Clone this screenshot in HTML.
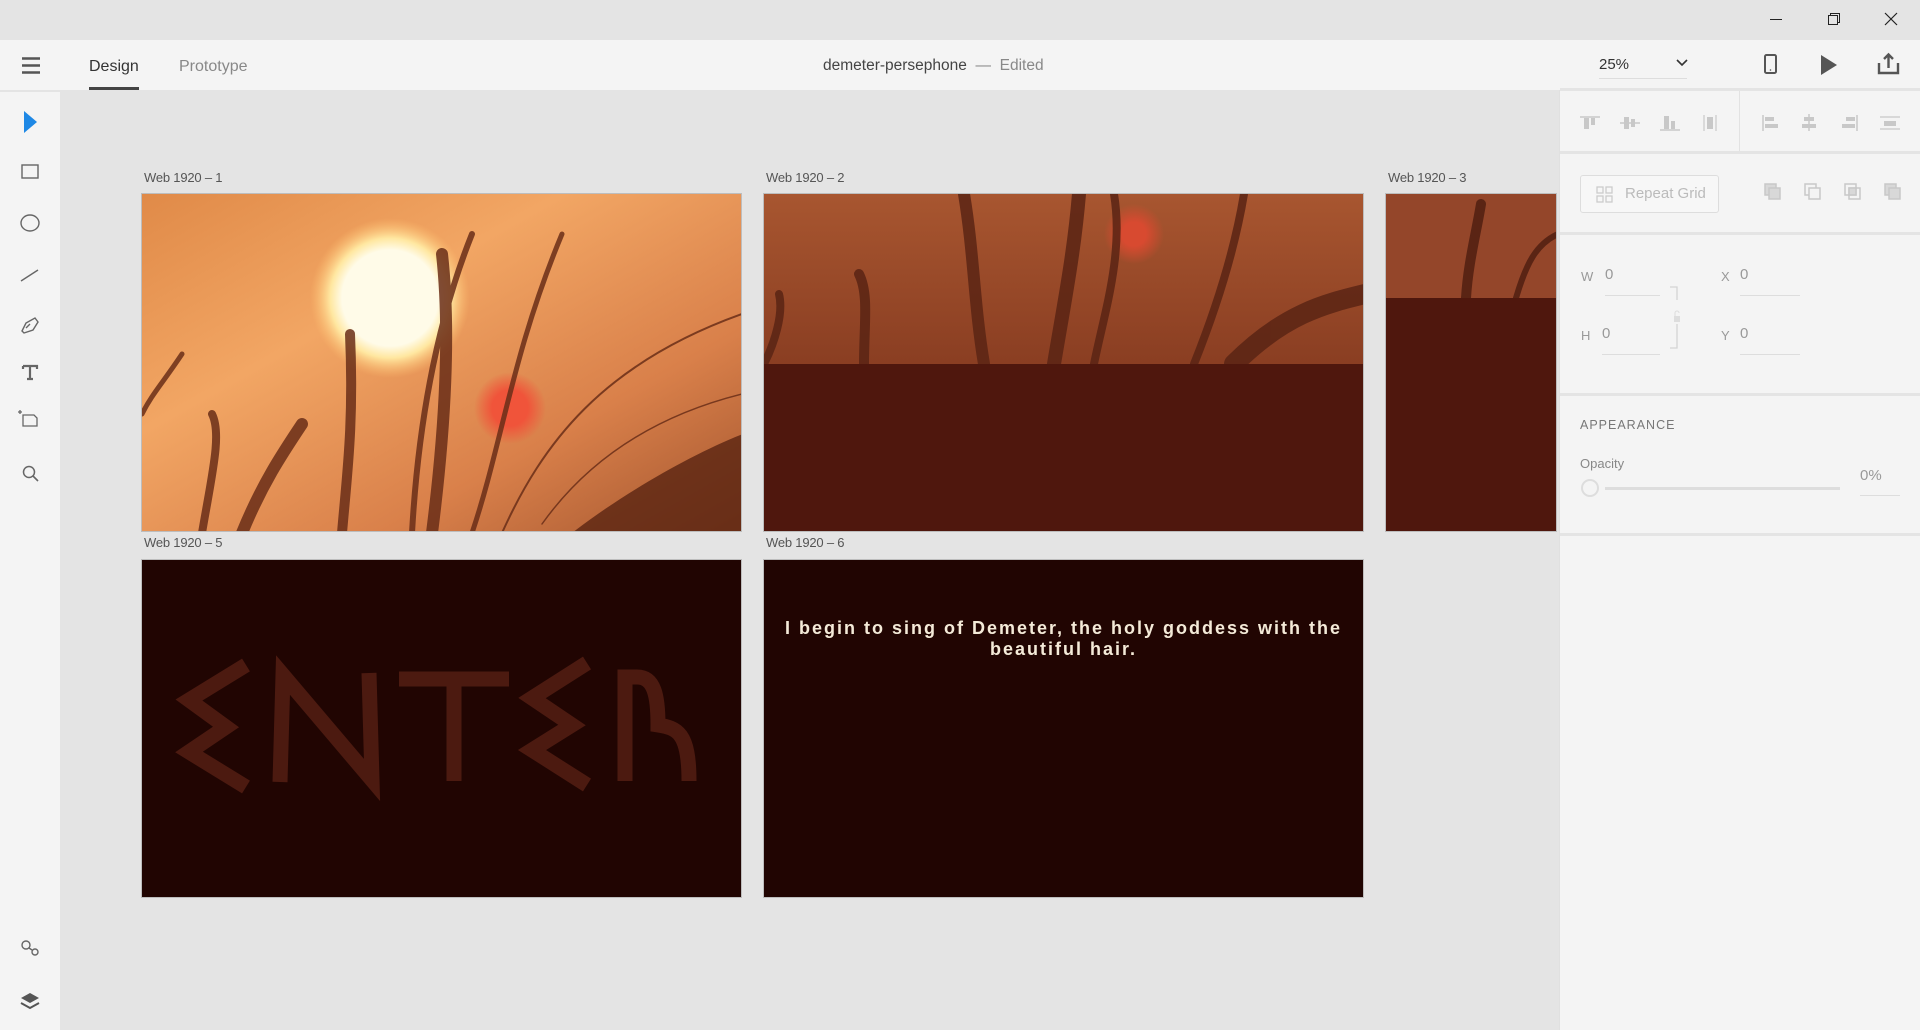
<!DOCTYPE html>
<html><head><meta charset="utf-8"><style>
*{margin:0;padding:0;box-sizing:border-box}
body{width:1920px;height:1030px;background:#e4e4e4;font-family:"Liberation Sans",sans-serif;position:relative;overflow:hidden}
.abs{position:absolute}
.t{position:absolute;white-space:nowrap}
.lbl{position:absolute;font-size:13px;color:#555;letter-spacing:-0.2px}
.ab{position:absolute;border:1px solid #bdbdbd;overflow:hidden}
.hr{position:absolute;left:1560px;width:360px;height:3px;background:#e4e4e4}
</style></head><body>
<!-- title bar -->
<div class="abs" style="left:0;top:0;width:1920px;height:40px;background:#e4e4e4"></div>
<svg class="abs" style="left:1760px;top:8px" width="150" height="24" viewBox="0 0 150 24">
<line x1="10" y1="11.5" x2="22" y2="11.5" stroke="#222" stroke-width="1"/>
<rect x="68.5" y="7.5" width="9" height="9" fill="none" stroke="#222"/>
<path d="M70.5 7.5V5.5h9v9h-2" fill="none" stroke="#222"/>
<path d="M125 5l12 12M137 5l-12 12" stroke="#222" stroke-width="1.2"/>
</svg>
<!-- top toolbar -->
<div class="abs" style="left:0;top:40px;width:1920px;height:50px;background:#f4f4f4"></div>
<svg class="abs" style="left:20px;top:56px" width="24" height="20"><path d="M2 2.5h18M2 9.5h18M2 16.5h18" stroke="#555" stroke-width="2.4"/></svg>
<div class="t" style="left:89px;top:58px;font-size:16px;color:#333">Design</div>
<div class="abs" style="left:89px;top:87px;width:50px;height:3px;background:#444"></div>
<div class="t" style="left:179px;top:58px;font-size:16px;color:#888">Prototype</div>
<div class="t" style="left:823px;top:57px;font-size:15.5px;color:#444">demeter-persephone <span style="color:#888">&nbsp;—&nbsp; Edited</span></div>
<div class="t" style="left:1599px;top:56px;font-size:15px;color:#333">25%</div>
<svg class="abs" style="left:1675px;top:58px" width="14" height="10"><path d="M2 2l5 5 5-5" fill="none" stroke="#333" stroke-width="1.6"/></svg>
<div class="abs" style="left:1599px;top:78px;width:88px;height:1px;background:#ddd"></div>
<svg class="abs" style="left:1760px;top:52px" width="150" height="30" viewBox="0 0 150 30">
<rect x="5" y="3" width="11" height="18" rx="1.5" fill="none" stroke="#555" stroke-width="2"/><circle cx="10.5" cy="18" r="0.8" fill="#555"/>
<path d="M61 3l16 10-16 10z" fill="#555"/>
<path d="M119 11v10h19V11M128.5 16V3M124 7l4.5-4.5 4.5 4.5" fill="none" stroke="#555" stroke-width="2.4"/>
</svg>
<!-- left toolbar -->
<div class="abs" style="left:0;top:92px;width:60px;height:938px;background:#f4f4f4"></div>
<svg class="abs" style="left:0;top:92px" width="60" height="938" viewBox="0 0 60 938">
<path d="M24 20v22l13-11z" fill="#1e88e5" transform="translate(0,-1)"/>
<rect x="22" y="73" width="16" height="13" fill="none" stroke="#666" stroke-width="1.4"/>
<ellipse cx="30" cy="131" rx="9" ry="8" fill="none" stroke="#666" stroke-width="1.4"/>
<path d="M21 189l17-11" stroke="#666" stroke-width="1.4"/>
<path d="M22 239l4-8 9-5 3 4-5 8-9 3zM26 236l4-4" fill="none" stroke="#666" stroke-width="1.4"/>
<path d="M23 274h14v3M30 274v13M27 287h6M23 274v3" fill="none" stroke="#666" stroke-width="2.2"/>
<path d="M23 323v11h14v-8l-3-3z M18 320h4M20 318v4" fill="none" stroke="#666" stroke-width="1.3"/>
<circle cx="29" cy="380" r="5.5" fill="none" stroke="#666" stroke-width="1.5"/><path d="M33 384l5 5" stroke="#666" stroke-width="1.6"/>
<circle cx="26" cy="853" r="4" fill="none" stroke="#666" stroke-width="1.4"/><circle cx="35" cy="860" r="3" fill="none" stroke="#666" stroke-width="1.4"/><path d="M29 856l3 2" stroke="#666" stroke-width="1.4"/>
<path d="M21 906l9-5 9 5-9 5z" fill="#555"/><path d="M21 911l9 5 9-5" fill="none" stroke="#555" stroke-width="2"/>
</svg>
<!-- right panel -->
<div class="abs" style="left:1560px;top:90px;width:360px;height:940px;background:#f4f4f4"></div>
<div class="abs" style="left:1559px;top:90px;width:1px;height:940px;background:#e0e0e0"></div>
<div class="hr" style="top:88px"></div>
<div class="abs" style="left:1739px;top:91px;width:1px;height:61px;background:#e2e2e2"></div>
<svg class="abs" style="left:1560px;top:105px" width="360" height="40" viewBox="0 0 360 40">
<g fill="#c8c8c8" stroke="#c8c8c8">
<path d="M20 12h20" stroke-width="1.5"/><rect x="24" y="13" width="5" height="11" stroke="none"/><rect x="31" y="13" width="4" height="7" stroke="none"/>
<path d="M60 18h20" stroke-width="1.5"/><rect x="64" y="12" width="5" height="12" stroke="none"/><rect x="71" y="14" width="4" height="8" stroke="none"/>
<path d="M100 25h20" stroke-width="1.5"/><rect x="104" y="11" width="5" height="13" stroke="none"/><rect x="111" y="16" width="4" height="8" stroke="none"/>
<path d="M144 10v16" stroke-width="1.2"/><path d="M156 10v16" stroke-width="1.2"/><rect x="147" y="12" width="6" height="12" stroke="none"/>
<path d="M203 10v16" stroke-width="1.5"/><rect x="205" y="12" width="9" height="4" stroke="none"/><rect x="205" y="19" width="13" height="4" stroke="none"/>
<path d="M249 9v17" stroke-width="1.5"/><rect x="244" y="12" width="10" height="4" stroke="none"/><rect x="242" y="19" width="14" height="4" stroke="none"/>
<path d="M297 10v16" stroke-width="1.5"/><rect x="286" y="12" width="9" height="4" stroke="none"/><rect x="282" y="19" width="13" height="4" stroke="none"/>
<path d="M320 12h20M320 24h20" stroke-width="1.2"/><rect x="324" y="16" width="12" height="5" stroke="none"/>
</g></svg>
<div class="hr" style="top:151px"></div>
<div class="abs" style="left:1580px;top:175px;width:139px;height:38px;border:1px solid #ddd;border-radius:3px;background:#f7f7f7"></div>
<svg class="abs" style="left:1595px;top:185px" width="20" height="20"><g fill="none" stroke="#ccc" stroke-width="1.3"><rect x="2" y="2" width="6" height="6"/><rect x="11" y="2" width="6" height="6"/><rect x="2" y="11" width="6" height="6"/><rect x="11" y="11" width="6" height="6"/></g></svg>
<div class="t" style="left:1625px;top:185px;font-size:15px;color:#bbb">Repeat Grid</div>
<svg class="abs" style="left:1760px;top:179px" width="160" height="30" viewBox="0 0 160 30"><g fill="none" stroke="#c8c8c8" stroke-width="1.5">
<rect x="5" y="5" width="11" height="11" fill="#d8d8d8"/><rect x="9" y="9" width="11" height="11" fill="#d8d8d8"/>
<rect x="45" y="5" width="11" height="11"/><rect x="49" y="9" width="11" height="11" fill="#f4f4f4"/>
<rect x="85" y="5" width="11" height="11"/><rect x="89" y="9" width="11" height="11"/><rect x="89" y="9" width="7" height="7" fill="#d8d8d8"/>
<rect x="125" y="5" width="11" height="11" fill="#d8d8d8"/><rect x="129" y="9" width="11" height="11" fill="#d8d8d8"/>
</g></svg>
<div class="hr" style="top:232px"></div>
<div class="t" style="left:1581px;top:269px;font-size:13px;color:#999">W</div>
<div class="t" style="left:1605px;top:266px;font-size:15px;color:#999">0</div>
<div class="abs" style="left:1605px;top:295px;width:55px;height:1px;background:#ddd"></div>
<div class="t" style="left:1721px;top:269px;font-size:13px;color:#999">X</div>
<div class="t" style="left:1740px;top:266px;font-size:15px;color:#999">0</div>
<div class="abs" style="left:1740px;top:295px;width:60px;height:1px;background:#ddd"></div>
<div class="t" style="left:1581px;top:328px;font-size:13px;color:#999">H</div>
<div class="t" style="left:1602px;top:325px;font-size:15px;color:#999">0</div>
<div class="abs" style="left:1602px;top:354px;width:58px;height:1px;background:#ddd"></div>
<div class="t" style="left:1721px;top:328px;font-size:13px;color:#999">Y</div>
<div class="t" style="left:1740px;top:325px;font-size:15px;color:#999">0</div>
<div class="abs" style="left:1740px;top:354px;width:60px;height:1px;background:#ddd"></div>
<svg class="abs" style="left:1668px;top:286px" width="20" height="65"><path d="M2 1h7v13M9 38v24H2" fill="none" stroke="#d4d4d4" stroke-width="1.3"/><rect x="6" y="30" width="6" height="6" fill="#ddd"/><path d="M7 30v-3a2 2 0 0 1 4 0" fill="none" stroke="#ddd"/></svg>
<div class="hr" style="top:393px"></div>
<div class="t" style="left:1580px;top:418px;font-size:12.5px;color:#777;letter-spacing:1px">APPEARANCE</div>
<div class="t" style="left:1580px;top:456px;font-size:13px;color:#888">Opacity</div>
<div class="abs" style="left:1581px;top:479px;width:18px;height:18px;border:2px solid #ddd;border-radius:50%;background:#f4f4f4"></div>
<div class="abs" style="left:1605px;top:487px;width:235px;height:3px;background:#ddd"></div>
<div class="t" style="left:1860px;top:467px;font-size:15px;color:#999">0%</div>
<div class="abs" style="left:1860px;top:495px;width:40px;height:1px;background:#ddd"></div>
<div class="hr" style="top:533px"></div>

<!-- artboards -->
<div class="lbl" style="left:144px;top:170px">Web 1920 – 1</div>
<div class="lbl" style="left:766px;top:170px">Web 1920 – 2</div>
<div class="lbl" style="left:1388px;top:170px">Web 1920 – 3</div>
<div class="lbl" style="left:144px;top:535px">Web 1920 – 5</div>
<div class="lbl" style="left:766px;top:535px">Web 1920 – 6</div>

<div class="ab" style="left:141px;top:193px;width:601px;height:339px">
<svg width="601" height="339" viewBox="0 0 601 339">
<defs>
<linearGradient id="g1" x1="0" y1="0" x2="1" y2="1"><stop offset="0" stop-color="#e08a48"/><stop offset=".35" stop-color="#f2a664"/><stop offset=".7" stop-color="#d9804a"/><stop offset="1" stop-color="#a2542e"/></linearGradient>
<radialGradient id="sun"><stop offset=".6" stop-color="#fffbe8"/><stop offset=".75" stop-color="#ffe7a0"/><stop offset="1" stop-color="#ffc070" stop-opacity="0"/></radialGradient>
<radialGradient id="red"><stop offset=".5" stop-color="#f0543a"/><stop offset="1" stop-color="#f0543a" stop-opacity="0"/></radialGradient>
</defs>
<rect width="601" height="339" fill="url(#g1)"/>
<circle cx="248" cy="104" r="80" fill="url(#sun)"/>
<circle cx="368" cy="214" r="36" fill="url(#red)"/>
<g fill="none" stroke="#6a2e18" stroke-linecap="round" opacity=".85">
<path d="M200 339C205 280 212 230 208 140" stroke-width="10"/>
<path d="M290 339C300 260 310 150 300 60" stroke-width="12"/>
<path d="M270 339C275 250 290 140 330 40" stroke-width="6"/>
<path d="M330 339C360 250 370 160 420 40" stroke-width="5"/>
<path d="M360 339C400 250 460 170 600 120" stroke-width="2"/>
<path d="M60 339C70 280 80 240 70 220" stroke-width="8"/>
<path d="M100 339C120 290 140 260 160 230" stroke-width="12"/>
<path d="M400 330C450 260 520 220 600 200" stroke-width="1.5"/>
<path d="M0 220C10 200 20 190 40 160" stroke-width="5"/>
</g>
<path d="M430 339C480 300 550 260 601 240V339z" fill="#5a2412" opacity=".8"/>
</svg></div>

<div class="ab" style="left:763px;top:193px;width:601px;height:339px;background:#4f170d">
<svg width="601" height="170" viewBox="0 0 601 170">
<defs><linearGradient id="g2" x1="0" y1="0" x2="0" y2="1"><stop offset="0" stop-color="#a85630"/><stop offset="1" stop-color="#8a3e22"/></linearGradient>
<radialGradient id="red2"><stop offset=".4" stop-color="#d84a30"/><stop offset="1" stop-color="#d84a30" stop-opacity="0"/></radialGradient></defs>
<rect width="601" height="170" fill="url(#g2)"/>
<circle cx="370" cy="40" r="30" fill="url(#red2)"/>
<g fill="none" stroke="#5a2414" stroke-linecap="round" opacity=".85">
<path d="M100 170C100 130 105 100 95 80" stroke-width="10"/>
<path d="M220 170C210 110 210 60 200 0" stroke-width="12"/>
<path d="M290 170C300 110 310 60 315 0" stroke-width="14"/>
<path d="M330 170C340 120 360 60 350 0" stroke-width="8"/>
<path d="M430 170C450 120 470 60 480 0" stroke-width="8"/>
<path d="M470 170C520 120 560 110 601 100" stroke-width="20"/>
<path d="M0 170C10 150 20 120 15 100" stroke-width="8"/>
</g></svg></div>

<div class="ab" style="left:1385px;top:193px;width:172px;height:339px;background:#4f170d">
<svg width="172" height="104" viewBox="0 0 172 104">
<rect width="172" height="104" fill="#94462a"/>
<g fill="none" stroke="#5a2414" stroke-linecap="round"><path d="M80 104C82 70 90 40 95 10" stroke-width="10"/><path d="M130 104C140 70 150 50 172 40" stroke-width="6"/></g>
</svg></div>

<div class="ab" style="left:141px;top:559px;width:601px;height:339px;background:#210502">
<svg width="601" height="339" viewBox="0 0 601 339" style="position:absolute;left:0;top:0">
<g fill="none" stroke="#4c1a10" stroke-width="15" stroke-linejoin="miter">
<path d="M104 105L47 140 84 167 47 192 104 227"/>
<path d="M138 222L141 115 230 220 227 113"/>
<path d="M257 119H367M312 119V221"/>
<path d="M445 103L390 138 430 165 390 190 445 225"/>
<path d="M483 221V117H495C512 117 516 135 516 165C535 168 547 172 547 221"/>
</g></svg></div>

<div class="ab" style="left:763px;top:559px;width:601px;height:339px;background:#210502">
<div style="position:absolute;left:0;right:0;top:58px;text-align:center;color:#f4ead8;font-size:18px;font-weight:bold;letter-spacing:2px;line-height:21px;padding:0 20px">I begin to sing of Demeter, the holy goddess with the beautiful hair.</div>
</div>
</body></html>
